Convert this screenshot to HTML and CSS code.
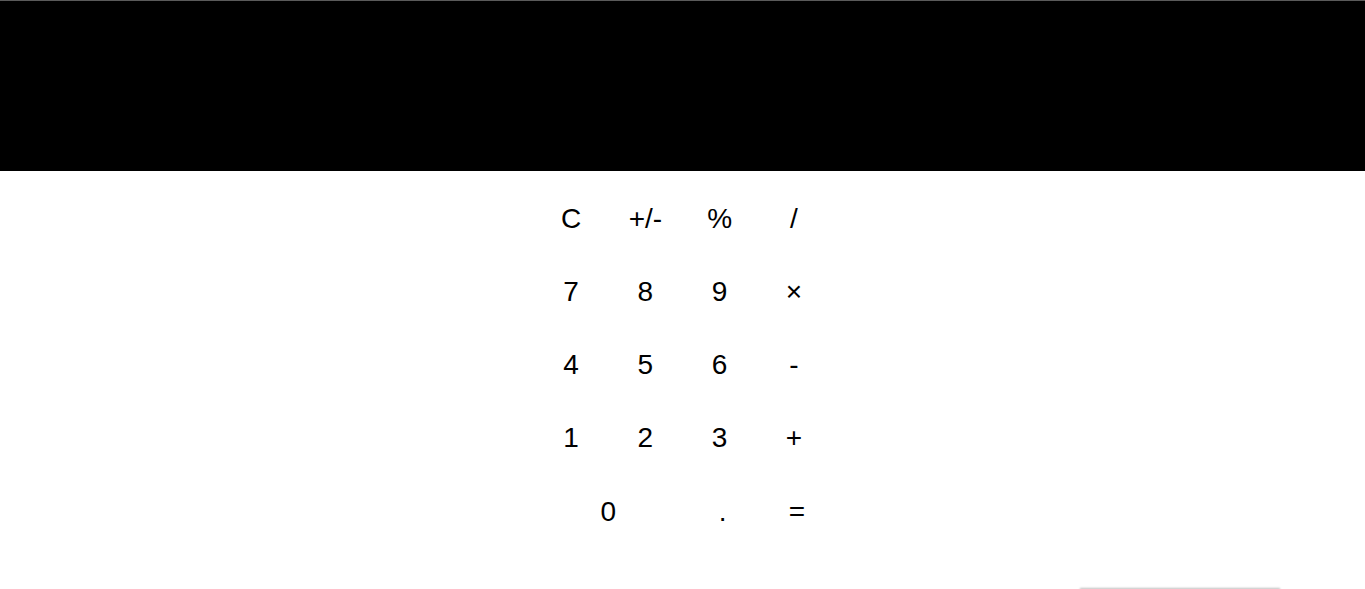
FILE: index.html
```html
<!DOCTYPE html>
<html lang="en">
<head>
<meta charset="utf-8">
<title>Calculator</title>
<link rel="stylesheet" href="styles.css">
</head>
<body>
<div class="calculator">
  <div class="display"></div>
  <div class="keys">
    <button class="key">C</button>
    <button class="key">+/-</button>
    <button class="key">%</button>
    <button class="key">/</button>
    <button class="key">7</button>
    <button class="key">8</button>
    <button class="key">9</button>
    <button class="key">×</button>
    <button class="key">4</button>
    <button class="key">5</button>
    <button class="key">6</button>
    <button class="key">-</button>
    <button class="key">1</button>
    <button class="key">2</button>
    <button class="key">3</button>
    <button class="key">+</button>
    <button class="key key-zero">0</button>
    <button class="key key-last">.</button>
    <button class="key key-last">=</button>
  </div>
</div>
<div class="toast"></div>
</body>
</html>
```
FILE: styles.css
```css
html, body {
  margin: 0;
  padding: 0;
  background: #fff;
}
body {
  font-family: "Liberation Sans", Arial, sans-serif;
  position: relative;
  min-height: 589px;
}
.calculator {
  display: flex;
  flex-direction: column;
  align-items: center;
}
.display {
  align-self: stretch;
  height: 170px;
  background: #000;
  border-top: 1px solid #5a5a5a;
}
.keys {
  margin-top: 11px;
  display: grid;
  grid-template-columns: repeat(4, 74.25px);
  grid-template-rows: 73px 73px 73px 73px 76px;
}
.key {
  border: 0;
  background: transparent;
  padding: 0;
  margin: 0;
  font-family: "Liberation Sans", Arial, sans-serif;
  font-size: 28px;
  color: #000;
  display: flex;
  align-items: center;
  justify-content: center;
}
.key-zero {
  grid-column: span 2;
}
.key-last {
  padding-left: 6px;
}
.toast {
  position: absolute;
  left: 1080px;
  top: 589px;
  width: 200px;
  height: 40px;
  background: #fff;
  box-shadow: 0 -1px 2px rgba(0, 0, 0, 0.25);
}
```
